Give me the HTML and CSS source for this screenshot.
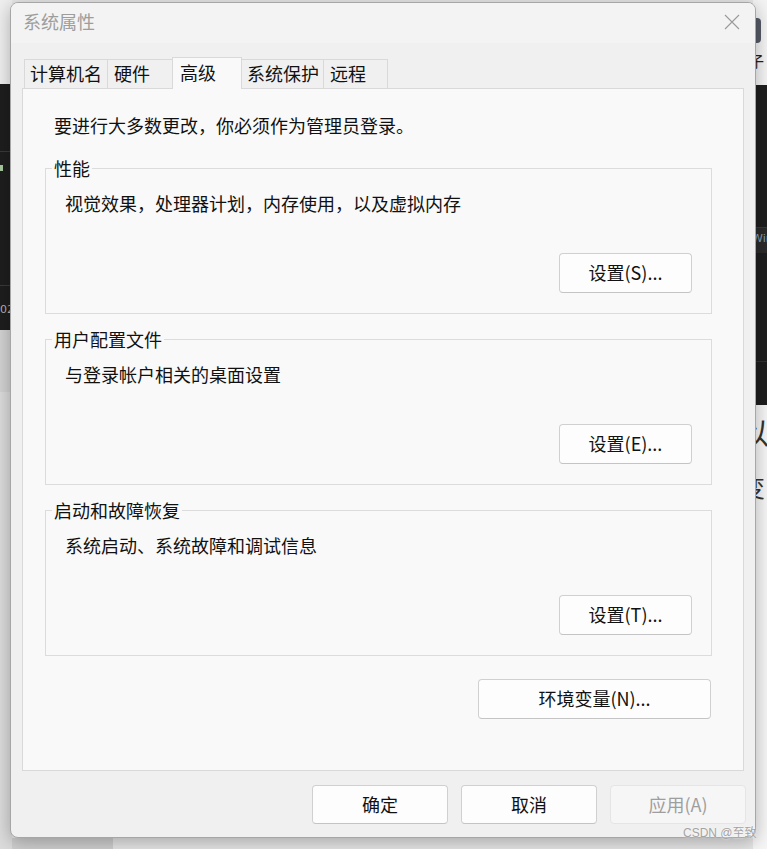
FILE: index.html
```html
<!DOCTYPE html>
<html lang="zh-CN">
<head>
<meta charset="utf-8">
<title>系统属性</title>
<link rel="stylesheet" href="styles.css">
</head>
<body>
<div class="desktop">
  <div class="strip strip-left">
    <div class="seg l-top"></div>
    <div class="seg l-dark">
      <div class="l-row1"></div>
      <div class="l-row2"><span class="marker"></span></div>
      <div class="l-row3"><span class="tiny">02</span></div>
    </div>
    <div class="seg l-grey"></div>
    <div class="seg l-light"></div>
  </div>
  <div class="mid">
    <div class="mid-bottom"><div class="mb-dark"></div><div class="mb-light"></div></div>
  </div>
  <div class="strip strip-right">
    <div class="seg r-top">
      <span class="r-icon"></span>
      <span class="r-char">子</span>
    </div>
    <div class="seg r-dark">
      <div class="r-d1"></div>
      <div class="r-band"><span class="r-band-text">Windo</span></div>
      <div class="r-d2"></div>
      <div class="r-d3"></div>
    </div>
    <div class="seg r-light">
      <span class="r-big">以</span>
      <span class="r-big2">变</span>
    </div>
  </div>
</div>

<div class="window">
  <div class="titlebar">
    <span class="title">系统属性</span>
    <svg class="close" width="16" height="16" viewBox="0 0 16 16"><path d="M1 1L15 15M15 1L1 15" stroke="#9a9a9a" stroke-width="1.1" fill="none"/></svg>
  </div>
  <div class="tabs">
    <div class="tab tab-1">计算机名</div>
    <div class="tab tab-2">硬件</div>
    <div class="tab tab-3 active">高级</div>
    <div class="tab tab-4">系统保护</div>
    <div class="tab tab-5">远程</div>
  </div>
  <div class="panel">
    <p class="intro">要进行大多数更改，你必须作为管理员登录。</p>
    <div class="group">
      <div class="legend">性能</div>
      <p class="desc">视觉效果，处理器计划，内存使用，以及虚拟内存</p>
      <div class="actions"><button class="btn btn-settings">设置(S)...</button></div>
    </div>
    <div class="group">
      <div class="legend">用户配置文件</div>
      <p class="desc">与登录帐户相关的桌面设置</p>
      <div class="actions"><button class="btn btn-settings">设置(E)...</button></div>
    </div>
    <div class="group">
      <div class="legend">启动和故障恢复</div>
      <p class="desc">系统启动、系统故障和调试信息</p>
      <div class="actions"><button class="btn btn-settings">设置(T)...</button></div>
    </div>
    <div class="env-row"><button class="btn btn-env">环境变量(N)...</button></div>
  </div>
  <div class="footer">
    <button class="btn btn-foot">确定</button>
    <button class="btn btn-foot">取消</button>
    <button class="btn btn-foot disabled">应用(A)</button>
  </div>
</div>
<div class="watermark">CSDN @至致</div>
</body>
</html>
```

FILE: styles.css
```css
* { box-sizing: border-box; }
html, body { margin: 0; padding: 0; }
body {
  width: 767px;
  height: 849px;
  overflow: hidden;
  position: relative;
  background: #e8e8e8;
  font-family: "Noto Sans CJK SC", "Noto Sans", sans-serif;
  color: #111;
}

/* ---------- desktop behind the dialog ---------- */
.desktop { display: flex; height: 849px; }
.strip { display: flex; flex-direction: column; overflow: hidden; }
.strip-left { width: 12px; }
.strip-right { width: 14px; }
.mid { flex: 1; display: flex; flex-direction: column; justify-content: flex-end; background: #e6e6e6; }
.mid-bottom { height: 11px; display: flex; }
.mb-dark { width: 101px; background: #cfcfcf; }
.mb-light { flex: 1; background: #e6e6e6; }

.l-top { height: 84px; background: #efefef; }
.l-dark { height: 246px; background: #1e1e1e; display: flex; flex-direction: column; }
.l-row1 { height: 68px; border-bottom: 1px solid #3a3a3a; }
.l-row2 { height: 134px; border-bottom: 1px solid #3a3a3a; padding-top: 13px; }
.marker { display: block; width: 3px; height: 6px; background: #a8c9a0; }
.l-row3 { flex: 1; padding-top: 18px; }
.tiny { display: block; font-family: "DejaVu Sans", sans-serif; font-size: 11px; line-height: 12px; color: #b5b5b5; }
.l-grey { height: 62px; background: #d3d3d3; }
.l-light { flex: 1; background: #dcdcdc; }

.r-top { height: 85px; background: #f4f4f4; display: flex; flex-direction: column; padding-top: 18px; }
.r-icon { display: block; width: 7px; height: 25px; margin-left: 1px; border-radius: 0 4px 4px 0; background: #555a66; }
.r-char { display: block; margin-left: -4px; margin-top: 10px; font-size: 15px; line-height: 16px; color: #222; }
.r-dark { height: 320px; background: #1e1e1e; display: flex; flex-direction: column; }
.r-d1 { height: 142px; }
.r-band { height: 26px; background: #2b2b2b; border-top: 1px solid #3a3a3a; padding-top: 5px; }
.r-band-text { display: block; margin-left: -1px; font-family: "DejaVu Sans", sans-serif; font-size: 11px; line-height: 12px; color: #8aa0b5; white-space: nowrap; }
.r-d2 { height: 109px; border-bottom: 1px solid #333; }
.r-d3 { flex: 1; }
.r-light { flex: 1; background: #f6f6f6; display: flex; flex-direction: column; padding-top: 8px; }
.r-big { display: block; margin-left: -14px; font-size: 30px; line-height: 36px; color: #333; }
.r-big2 { display: block; margin-left: -12px; margin-top: 24px; font-size: 24px; line-height: 28px; color: #333; }

/* ---------- dialog window ---------- */
.window {
  position: absolute;
  left: 10px;
  top: 2px;
  width: 746px;
  height: 836px;
  border: 1px solid #a6a6a6;
  border-radius: 8px;
  background: #f0f0f0;
  box-shadow: 0 4px 18px rgba(0, 0, 0, 0.28);
  display: flex;
  flex-direction: column;
  overflow: hidden;
}
.titlebar {
  height: 40px;
  background: #f3f3f3;
  display: flex;
  align-items: center;
  justify-content: space-between;
  padding: 0 15px 0 12px;
}
.title { font-size: 18px; line-height: 24px; color: #9d9d9d; margin-top: -4px; }
.close { display: block; width: 16px; height: 16px; margin-top: -2px; }

.tabs {
  margin-top: 14px;
  padding-left: 13px;
  height: 31px;
  display: flex;
  align-items: flex-end;
}
.tab {
  height: 29px;
  border: 1px solid #d9d9d9;
  border-bottom: none;
  background: #f0f0f0;
  font-size: 18px;
  line-height: 26px;
  padding-left: 5px;
  white-space: nowrap;
  color: #111;
}
.tab + .tab { margin-left: -1px; }
.tab-1 { width: 84px; }
.tab-2 { width: 66px; padding-left: 6px; }
.tab-3 { width: 70px; }
.tab-4 { width: 83px; }
.tab-5 { width: 65px; padding-left: 6px; }
.tab.active {
  height: 32px;
  margin-bottom: -1px;
  background: #f9f9f9;
  padding-left: 7px;
  padding-top: 1px;
  position: relative;
  z-index: 2;
}

.panel {
  margin-left: 11px;
  width: 722px;
  height: 683px;
  border: 1px solid #d9d9d9;
  background: #f9f9f9;
  padding: 24px 31px 0 22px;
  display: flex;
  flex-direction: column;
}
.intro { margin: 0 0 0 9px; font-size: 18px; line-height: 24px; }

.group {
  margin-top: 25px;
  border: 1px solid #dcdcdc;
  padding: 0 19px 20px 19px;
}
.intro + .group { margin-top: 31px; }
.legend {
  width: fit-content;
  margin: -11px 0 0 -13px;
  padding: 0 2px 2px 2px;
  background: #f9f9f9;
  font-size: 18px;
  line-height: 20px;
}
.desc { margin: 11px 0 0 0; font-size: 18px; line-height: 24px; }
.actions { margin-top: 38px; display: flex; justify-content: flex-end; }

.btn {
  display: flex;
  align-items: center;
  justify-content: center;
  font-family: inherit;
  font-size: 18px;
  color: #111;
  background: #fdfdfd;
  border: 1px solid #d0d0d0;
  border-bottom-color: #c4c4c4;
  border-radius: 4px;
  padding: 0 0 2px 0;
  line-height: 24px;
}
.btn-settings { width: 133px; height: 40px; }
.env-row { margin-top: 23px; margin-right: 1px; display: flex; justify-content: flex-end; }
.btn-env { width: 233px; height: 40px; }

.footer {
  margin-top: 14px;
  padding-right: 9px;
  display: flex;
  justify-content: flex-end;
  gap: 13px;
}
.btn-foot { width: 136px; height: 39px; }
.btn.disabled {
  background: #f6f6f6;
  border-color: #e5e5e5;
  color: #9e9e9e;
}

.watermark {
  position: absolute;
  left: 683px;
  top: 826px;
  font-family: "Liberation Sans", "Noto Sans CJK SC", sans-serif;
  font-size: 12px;
  line-height: 14px;
  color: #a3a3a3;
  text-shadow: 0 0 2px #fff;
  white-space: nowrap;
}
```
